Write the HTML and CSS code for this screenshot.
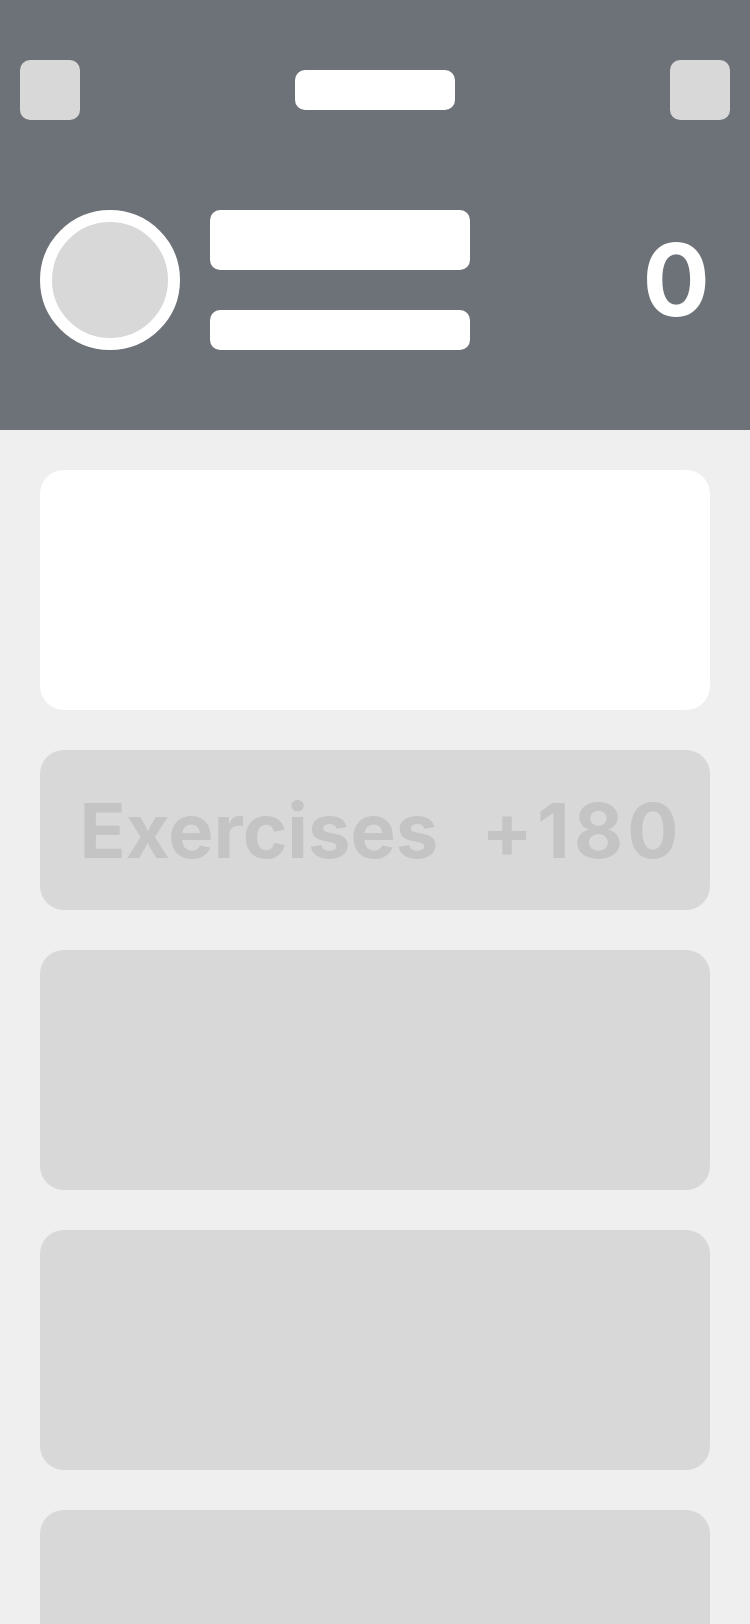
FILE: index.html
```html
<!DOCTYPE html>
<html lang="en">
<head>
<meta charset="utf-8">
<title>Profile</title>
<link rel="stylesheet" href="styles.css">
</head>
<body>
<header class="header">
  <div class="topbar">
    <div class="icon-btn"></div>
    <div class="title-pill"></div>
    <div class="icon-btn"></div>
  </div>
  <div class="profile">
    <div class="avatar"></div>
    <div class="lines">
      <div class="line line-lg"></div>
      <div class="line line-sm"></div>
    </div>
    <div class="score">0</div>
  </div>
</header>
<main class="content">
  <div class="card card-white"></div>
  <div class="card card-row">
    <span class="row-label">Exercises</span>
    <span class="row-value">+180</span>
  </div>
  <div class="card"></div>
  <div class="card"></div>
  <div class="card"></div>
</main>
</body>
</html>
```
FILE: styles.css
```css
* { box-sizing: border-box; }
html, body {
  margin: 0;
  padding: 0;
}
body {
  background: #efefef;
  font-family: Inter, "Liberation Sans", sans-serif;
  width: 750px;
}
.header {
  background: #6d7178;
  height: 430px;
  padding: 60px 20px 0;
}
.topbar {
  display: flex;
  justify-content: space-between;
  align-items: center;
  height: 60px;
}
.icon-btn {
  width: 60px;
  height: 60px;
  border-radius: 10px;
  background: #d8d8d8;
}
.title-pill {
  width: 160px;
  height: 40px;
  border-radius: 10px;
  background: #ffffff;
}
.profile {
  display: flex;
  align-items: center;
  margin-top: 90px;
  padding: 0 20px;
  height: 140px;
}
.avatar {
  width: 140px;
  height: 140px;
  border-radius: 50%;
  border: 12px solid #ffffff;
  background: #d8d8d8;
  flex: none;
}
.lines {
  display: flex;
  flex-direction: column;
  gap: 40px;
  margin-left: 30px;
}
.line {
  width: 260px;
  background: #ffffff;
  border-radius: 10px;
}
.line-lg { height: 60px; }
.line-sm { height: 40px; }
.score {
  margin-left: auto;
  color: #ffffff;
  font-weight: 700;
  font-size: 100px;
  line-height: 1;
}
.content {
  display: flex;
  flex-direction: column;
  gap: 40px;
  padding: 40px;
}
.card {
  height: 240px;
  border-radius: 24px;
  background: #d8d8d8;
  flex: none;
}
.card-white { background: #ffffff; }
.card-row {
  height: 160px;
  display: flex;
  align-items: center;
  justify-content: center;
  gap: 43px;
  padding-left: 8px;
  color: #c4c4c4;
  font-weight: 700;
  font-size: 76px;
  line-height: 1;
}
.row-value {
  letter-spacing: 4px;
  margin-right: -4px;
}
```
